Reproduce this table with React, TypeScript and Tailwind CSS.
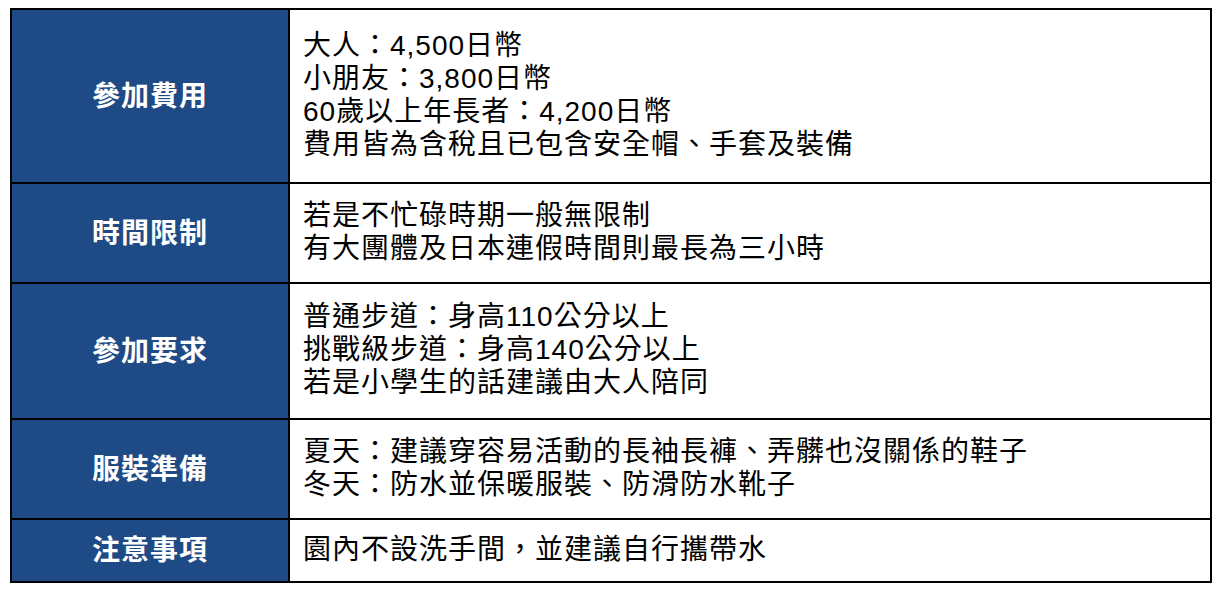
const rows: { label: string; lines: string[]; h: string }[] = [
  {
    label: '參加費用',
    lines: ['大人：4,500日幣', '小朋友：3,800日幣', '60歲以上年長者：4,200日幣', '費用皆為含稅且已包含安全帽、手套及裝備'],
    h: 'h-[172px]',
  },
  {
    label: '時間限制',
    lines: ['若是不忙碌時期一般無限制', '有大團體及日本連假時間則最長為三小時'],
    h: 'h-[100px]',
  },
  {
    label: '參加要求',
    lines: ['普通步道：身高110公分以上', '挑戰級步道：身高140公分以上', '若是小學生的話建議由大人陪同'],
    h: 'h-[136px]',
  },
  {
    label: '服裝準備',
    lines: ['夏天：建議穿容易活動的長袖長褲、弄髒也沒關係的鞋子', '冬天：防水並保暖服裝、防滑防水靴子'],
    h: 'h-[100px]',
  },
  {
    label: '注意事項',
    lines: ['園內不設洗手間，並建議自行攜帶水'],
    h: 'h-[63px]',
  },
];

export default function App() {
  return (
    <div lang="zh-TW" className="w-[1220px] h-[600px] bg-white pt-[8px] pl-[10px] font-['Liberation_Sans','Noto_Sans_CJK_TC',sans-serif]">
      <div className="w-[1202px] border-2 border-black">
        {rows.map((row, i) => (
          <div key={row.label} className={`flex ${row.h} ${i > 0 ? 'border-t-2 border-black' : ''}`}>
            <div className="w-[278px] shrink-0 border-r-2 border-black bg-[#1e4a86] flex items-center justify-center">
              <span className="text-white font-bold text-[28px] leading-[33px] tracking-[1px]">{row.label}</span>
            </div>
            <div className="flex-1 flex flex-col justify-center pl-[13px] pb-[3px] text-black text-[28px] leading-[33px] tracking-[1px]">
              {row.lines.map((line) => (
                <div key={line}>{line}</div>
              ))}
            </div>
          </div>
        ))}
      </div>
    </div>
  );
}
